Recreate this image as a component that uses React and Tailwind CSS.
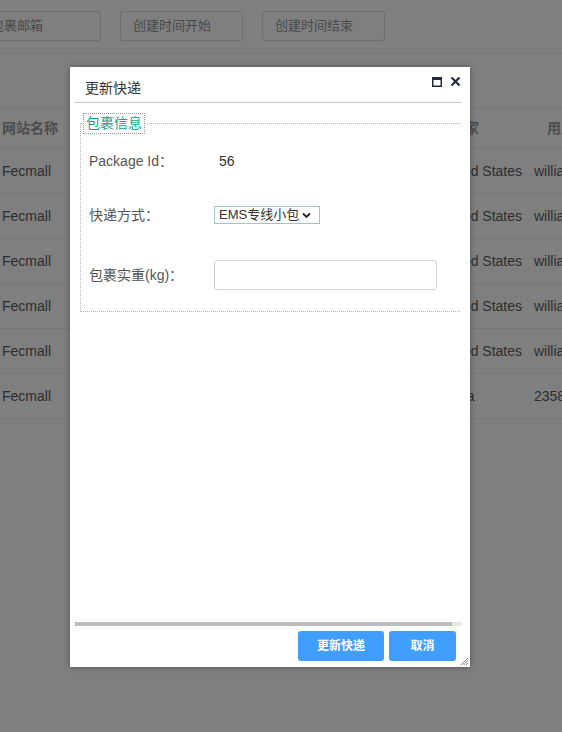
import React from "react";

const font = { fontFamily: '"Liberation Sans", Arial, "Noto Sans CJK SC", sans-serif' };

const rows = [
  ["Fecmall", "United States", "williams"],
  ["Fecmall", "United States", "williams"],
  ["Fecmall", "United States", "williams"],
  ["Fecmall", "United States", "williams"],
  ["Fecmall", "United States", "williams"],
  ["Fecmall", "China", "2358"],
];

export default function App() {
  return (
    <div className="relative w-[562px] h-[732px] overflow-hidden bg-[#7f7f7f] text-[14px]" style={font}>
      {/* background page */}
      <div className="flex gap-[19px] pt-[11px] ml-[-22px]">
        {["包裹邮箱", "创建时间开始", "创建时间结束"].map((t) => (
          <div key={t} className="shrink-0 w-[123px] h-[30px] border border-[#6e6e6e] rounded-[3px] pl-[12px] flex items-center text-[13px] text-[#4a4a4a] whitespace-nowrap">
            {t}
          </div>
        ))}
      </div>
      <div className="mt-[12px] border-t border-[#777]" />
      <div className="mt-[53px] border-t border-[#777]">
        <div className="flex h-[41px] items-center border-b border-[#777] font-bold text-[#4d4d4d] whitespace-nowrap">
          <div className="shrink-0 w-[451px] pl-[2px]">网站名称</div>
          <div className="shrink-0 w-[83px]">国家</div>
          <div className="shrink-0 pl-[13px]">用户</div>
        </div>
        {rows.map((r, i) => (
          <div key={i} className="flex h-[45px] items-center border-b border-[#777] text-[#2e2e2e] whitespace-nowrap">
            <div className="shrink-0 w-[438px] pl-[2px]">{r[0]}</div>
            <div className="shrink-0 w-[96px]">{r[1]}</div>
            <div className="shrink-0">{r[2]}</div>
          </div>
        ))}
      </div>

      {/* dialog */}
      <div className="absolute left-[70px] top-[67px] w-[400px] h-[600px] bg-white shadow-[0_0_6px_rgba(0,0,0,0.35)] flex flex-col pl-[5px] pr-[9px]">
        <div className="relative h-[36px] border-b border-[#c8c8c8] flex items-end pb-[3px] pl-[10px] text-[14px] text-[#333]">
          更新快递
          <div className="absolute right-0 top-[9px] flex items-center gap-[8px]">
            <svg width="10" height="10" viewBox="0 0 10 10">
              <rect x="0.75" y="0.75" width="8.5" height="8.5" fill="none" stroke="#1f2d3d" strokeWidth="1.5" />
              <rect x="0" y="0" width="10" height="3" fill="#1f2d3d" />
            </svg>
            <svg width="11" height="11" viewBox="0 0 11 11">
              <path d="M1.5 1.5L9.5 9.5M9.5 1.5L1.5 9.5" stroke="#1f2d3d" strokeWidth="2.2" />
            </svg>
          </div>
        </div>
        <div className="flex-1 overflow-hidden">
          <div className="w-[420px] mt-[10px] ml-[5px] relative">
            <div className="absolute left-0 right-0 top-[10px] bottom-0 border border-dotted border-[#b5b5b5]" />
            <div className="relative ml-[3px] inline-block border border-dotted border-[#9a9a9a] px-[2px] h-[21px] leading-[19px] text-[14px] text-[#1a9e8c] bg-white">
              包裹信息
            </div>
            <div className="relative pl-[9px] pb-[22px] text-[14px]">
              <div className="flex items-center h-[36px] mt-[9px]">
                <div className="w-[130px] text-[#555]">Package Id：</div>
                <div className="text-[#333]">56</div>
              </div>
              <div className="flex items-center h-[36px] mt-[18px]">
                <div className="w-[125px] text-[#555]">快递方式：</div>
                <div className="h-[18px] w-[106px] border border-[#a6c3c8] flex items-center pl-[4px] text-[13px] text-[#333]">
                  EMS专线小包
                  <svg className="ml-[3px]" width="9" height="7" viewBox="0 0 9 7">
                    <path d="M1 1.5L4.5 5L8 1.5" stroke="#222" strokeWidth="1.8" fill="none" />
                  </svg>
                </div>
              </div>
              <div className="flex items-center h-[30px] mt-[27px]">
                <div className="w-[125px] text-[#555]">包裹实重(kg)：</div>
                <div className="h-[30px] w-[223px] border border-[#d0d0d0] rounded-[3px]" />
              </div>
            </div>
          </div>
        </div>
        <div className="flex items-center h-[4px] mb-[5px]">
          <div className="w-[377px] h-[4px] bg-[#bdbdbd]" />
          <div className="flex-1 h-[4px] bg-[#e6e6e6]" />
        </div>
        <div className="flex justify-end gap-[5px] pr-[5px] pb-[6px]">
          <button className="w-[86px] h-[30px] rounded-[3px] bg-[#409eff] text-white text-[12px] font-bold">更新快递</button>
          <button className="w-[67px] h-[30px] rounded-[3px] bg-[#409eff] text-white text-[12px] font-bold">取消</button>
        </div>
        <svg className="absolute right-[2px] bottom-[2px]" width="7" height="7" viewBox="0 0 7 7">
          <path d="M7 0L0 7M7 2.5L2.5 7M7 5L5 7" stroke="#666" strokeWidth="0.8" />
        </svg>
      </div>
    </div>
  );
}
